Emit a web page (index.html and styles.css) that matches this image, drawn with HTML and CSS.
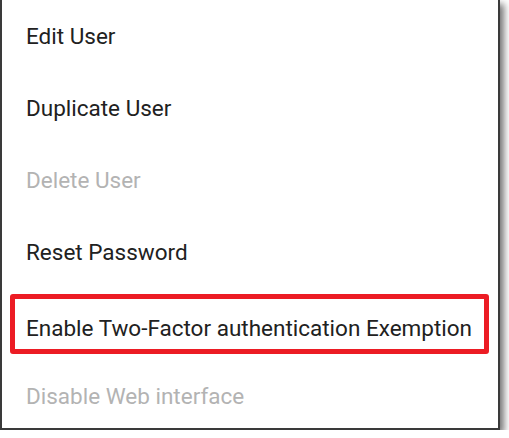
FILE: index.html
```html
<!DOCTYPE html>
<html lang="en">
<head>
  <meta charset="UTF-8">
  <title>User actions</title>
  <link rel="stylesheet" href="styles.css">
</head>
<body>
  <div class="menu">
    <div class="item">Edit User</div>
    <div class="item">Duplicate User</div>
    <div class="item disabled">Delete User</div>
    <div class="item">Reset Password</div>
    <div class="item highlight">Enable Two-Factor authentication Exemption</div>
    <div class="item disabled">Disable Web interface</div>
  </div>
</body>
</html>
```

FILE: styles.css
```css
body {
  margin: 0;
  background: #fff;
  font-family: Roboto, "Liberation Sans", sans-serif;
}

.menu {
  width: 500px;
  height: 430px;
  border-left: 2px solid #3a3a3a;
  border-right: 2px solid #3a3a3a;
  border-bottom: 2px solid #3a3a3a;
  background: #fff;
  box-shadow: 4px 4px 7px rgba(0, 0, 0, 0.55);
  display: flex;
  flex-direction: column;
  box-sizing: border-box;
  overflow: hidden;
}

.item {
  height: 72px;
  line-height: 72px;
  padding-left: 24px;
  font-size: 22.5px;
  color: #212121;
  flex: none;
}

.disabled {
  color: #b3b3b3;
}

.highlight {
  margin: 6px 9px 6px 8px;
  height: 60px;
  line-height: 58px;
  padding-left: 11px;
  border: 5px solid #ec1c24;
  border-radius: 3px;
  box-sizing: border-box;
}
```
